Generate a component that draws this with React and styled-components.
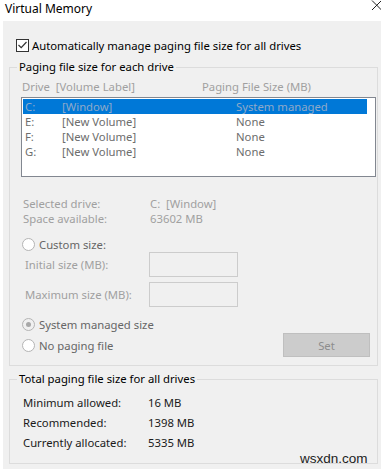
import styled, { createGlobalStyle } from 'styled-components'

const GlobalStyle = createGlobalStyle`
  html, body {
    margin: 0;
    padding: 0;
    background: #fff;
  }
  body {
    font-family: "Noto Sans", "Liberation Sans", sans-serif;
    font-size: 11.3px;
  }
`

const Window = styled.div`
  position: relative;
  width: 381px;
  height: 469px;
  background: #fff;
  overflow: hidden;
`

const TitleBar = styled.div`
  display: flex;
  justify-content: space-between;
  align-items: flex-start;
  height: 21px;
  padding-left: 5px;
  box-sizing: border-box;
`

const Title = styled.span`
  font-size: 12px;
  line-height: 17px;
  color: #000;
`

const CloseBtn = styled.div`
  display: flex;
  width: 12px;
  height: 12px;
`

const Body = styled.div`
  margin-left: 3px;
  height: 448px;
  background: #f0f0f0;
  padding-top: 17px;
  box-sizing: border-box;
`

const CheckRow = styled.label`
  display: flex;
  align-items: center;
  height: 14px;
  padding-left: 13px;
  gap: 3px;
  color: #000;
`

const CheckBox = styled.span`
  display: flex;
  align-items: center;
  justify-content: center;
  width: 11px;
  height: 11px;
  border: 1px solid #333;
  background: #fff;
`

const GroupBox = styled.div`
  border: 1px solid #dcdcdc;
  margin: ${p => p.$top}px 3px 0 6px;
  padding-bottom: ${p => p.$bottom}px;
`

const GroupTitle = styled.div`
  width: fit-content;
  margin: -8px 0 0 7px;
  padding: 0 2px;
  background: #f0f0f0;
  line-height: 14px;
  color: #000;
`

const HeaderRow = styled.div`
  display: grid;
  grid-template-columns: 180px auto;
  margin-top: 6px;
  padding-left: 12px;
  line-height: 14px;
  color: #a0a0a0;
`

const ListBox = styled.div`
  height: 76px;
  margin: 3px 1px 0 11px;
  border: 1px solid #828790;
  background: #fff;
  padding: 1px 0;
`

const ListRow = styled.div`
  display: grid;
  grid-template-columns: 37px 174px auto;
  height: 15px;
  line-height: 15px;
  margin: 0 8px 0 1px;
  padding-left: 2px;
  background: ${p => (p.$selected ? '#0078d7' : 'transparent')};
  color: ${p => (p.$selected ? '#8fa9c9' : '#6d6d6d')};
`

const InfoRow = styled.div`
  display: grid;
  grid-template-columns: 127px auto;
  padding-left: 13px;
  line-height: 15px;
  color: #a0a0a0;
  margin-top: ${p => p.$top || 0}px;
`

const RadioRow = styled.div`
  display: flex;
  align-items: center;
  justify-content: space-between;
  height: ${p => p.$height || 16}px;
  padding: 0 7px 0 12px;
  margin-top: ${p => p.$top || 0}px;
`

const RadioLabel = styled.label`
  display: flex;
  align-items: center;
  gap: 4px;
  color: #666;
`

const Radio = styled.span`
  display: flex;
  align-items: center;
  justify-content: center;
  width: 11px;
  height: 11px;
  border-radius: 50%;
  border: 1px solid #b4b4b4;
  background: ${p => (p.$checked ? '#f0f0f0' : '#fff')};
`

const Dot = styled.span`
  width: 5px;
  height: 5px;
  border-radius: 50%;
  background: #a8a8a8;
`

const SizeRow = styled.div`
  display: grid;
  grid-template-columns: 124px 89px;
  align-items: center;
  padding-left: 15px;
  margin-top: ${p => p.$top || 0}px;
  color: #a0a0a0;
`

const SizeInput = styled.div`
  height: 23px;
  border: 1px solid #cccccc;
  background: #f0f0f0;
`

const SetButton = styled.button`
  width: 87px;
  height: 24px;
  border: 1px solid #bfbfbf;
  background: #cccccc;
  color: #8d8d8d;
  font-family: inherit;
  font-size: 11.3px;
  padding: 0;
`

const TotalRow = styled.div`
  display: grid;
  grid-template-columns: 125px auto;
  padding-left: 13px;
  line-height: 20px;
  color: #1a1a1a;
  margin-top: ${p => p.$top || 0}px;
`

const Watermark = styled.span`
  position: absolute;
  left: 300px;
  top: 451px;
  font-family: "Liberation Sans", sans-serif;
  font-size: 13.5px;
  line-height: 15px;
  color: #222;
`

const drives = [
  { letter: 'C:', label: '[Window]', size: 'System managed', selected: true },
  { letter: 'E:', label: '[New Volume]', size: 'None' },
  { letter: 'F:', label: '[New Volume]', size: 'None' },
  { letter: 'G:', label: '[New Volume]', size: 'None' },
]

const totals = [
  ['Minimum allowed:', '16 MB'],
  ['Recommended:', '1398 MB'],
  ['Currently allocated:', '5335 MB'],
]

function App() {
  return (
    <Window>
      <GlobalStyle />
      <TitleBar>
        <Title>Virtual Memory</Title>
        <CloseBtn>
          <svg width="12" height="12" viewBox="0 0 12 12">
            <path d="M3 0.5 L12.5 10 M12.5 0.5 L3 10" stroke="#222" strokeWidth="1" fill="none" />
          </svg>
        </CloseBtn>
      </TitleBar>

      <Body>
        <CheckRow>
          <CheckBox>
            <svg width="9" height="8" viewBox="0 0 9 8">
              <path d="M0.5 4 L3.2 6.7 L8.5 1" stroke="#333" strokeWidth="1.2" fill="none" />
            </svg>
          </CheckBox>
          Automatically manage paging file size for all drives
        </CheckRow>

        <GroupBox $top={15} $bottom={8}>
          <GroupTitle>Paging file size for each drive</GroupTitle>
          <HeaderRow>
            <span>Drive&nbsp; [Volume Label]</span>
            <span>Paging File Size (MB)</span>
          </HeaderRow>
          <ListBox>
            {drives.map(d => (
              <ListRow key={d.letter} $selected={d.selected}>
                <span>{d.letter}</span>
                <span>{d.label}</span>
                <span>{d.size}</span>
              </ListRow>
            ))}
          </ListBox>

          <InfoRow $top={19}>
            <span>Selected drive:</span>
            <span>C:&nbsp; [Window]</span>
          </InfoRow>
          <InfoRow>
            <span>Space available:</span>
            <span>63602 MB</span>
          </InfoRow>

          <RadioRow $top={10}>
            <RadioLabel>
              <Radio />
              Custom size:
            </RadioLabel>
          </RadioRow>
          <SizeRow>
            <span>Initial size (MB):</span>
            <SizeInput />
          </SizeRow>
          <SizeRow $top={5}>
            <span>Maximum size (MB):</span>
            <SizeInput />
          </SizeRow>

          <RadioRow $top={9}>
            <RadioLabel>
              <Radio $checked>
                <Dot />
              </Radio>
              System managed size
            </RadioLabel>
          </RadioRow>
          <RadioRow $top={1} $height={24}>
            <RadioLabel>
              <Radio />
              No paging file
            </RadioLabel>
            <SetButton type="button">Set</SetButton>
          </RadioRow>
        </GroupBox>

        <GroupBox $top={13} $bottom={10}>
          <GroupTitle>Total paging file size for all drives</GroupTitle>
          {totals.map(([label, value], i) => (
            <TotalRow key={label} $top={i === 0 ? 7 : 0}>
              <span>{label}</span>
              <span>{value}</span>
            </TotalRow>
          ))}
        </GroupBox>
      </Body>
      <Watermark>wsxdn.com</Watermark>
    </Window>
  )
}

export default App
